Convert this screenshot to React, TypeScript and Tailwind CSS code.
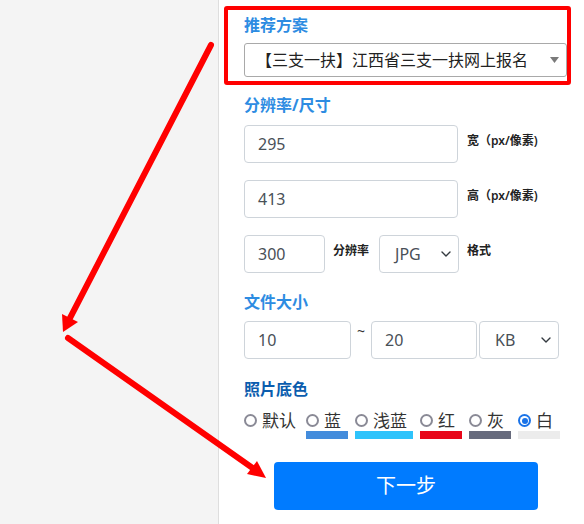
import React, { useState } from 'react';

const FONT = { fontFamily: '"Noto Sans", "Noto Sans CJK SC", sans-serif' };

const BG_OPTIONS = [
  { key: 'default', label: '默认', width: 'w-[55px]', bar: '' },
  { key: 'blue', label: '蓝', width: 'w-[42px]', bar: 'bg-[#438cdc]' },
  { key: 'lightblue', label: '浅蓝', width: 'w-[58px]', bar: 'bg-[#2ec3fb]' },
  { key: 'red', label: '红', width: 'w-[42px]', bar: 'bg-[#e8071a]' },
  { key: 'gray', label: '灰', width: 'w-[42px]', bar: 'bg-[#676b7d]' },
  { key: 'white', label: '白', width: 'w-[42px]', bar: 'bg-[#ececec]' },
];

const Chevron = () => (
  <svg width="10" height="6" viewBox="0 0 10 6" className="shrink-0">
    <path d="M1 1l4 4 4-4" fill="none" stroke="#343a40" strokeWidth="1.4" strokeLinecap="round" strokeLinejoin="round" />
  </svg>
);

const TextBox = ({ value, className }: { value: string; className: string }) => (
  <div className={`h-[38px] border border-[#ced4da] rounded-[4px] bg-white flex items-center pl-[13px] text-[16px] text-[#495057] ${className}`}>
    {value}
  </div>
);

const SelectBox = ({ value, className }: { value: string; className: string }) => (
  <div className={`h-[38px] border border-[#ced4da] rounded-[4px] bg-white flex items-center justify-between pl-[15px] pr-[7px] text-[16px] text-[#495057] ${className}`}>
    <span>{value}</span>
    <Chevron />
  </div>
);

const Heading = ({ children, dark }: { children: React.ReactNode; dark?: boolean }) => (
  <div className={`h-[24px] leading-[24px] text-[16px] font-bold ${dark ? 'text-[#0b5dae]' : 'text-[#2d8ce2]'}`}>{children}</div>
);

const Hint = ({ children, className }: { children: React.ReactNode; className?: string }) => (
  <span className={`pt-[8px] text-[12px] leading-[16px] font-semibold text-[#222] whitespace-nowrap ${className || ''}`}>{children}</span>
);

export default function App() {
  const [bg, setBg] = useState('white');

  return (
    <div className="relative w-[584px] h-[524px] overflow-hidden flex bg-[#f4f4f4]" style={FONT}>
      <div className="w-[218px] shrink-0" />

      {/* settings panel */}
      <div className="flex-1 bg-white border-l border-[#dedede] pl-[25px] pt-[13px]">
        <Heading>推荐方案</Heading>
        <div className="mt-[6px] w-[323px] h-[34px] border border-[#a9a9a9] rounded-[3px] flex items-center justify-between pl-[11px] pr-[7px] text-[16px] text-[#222]">
          <span>【三支一扶】江西省三支一扶网上报名</span>
          <svg width="9" height="6" viewBox="0 0 9 6"><path d="M0 0h9L4.5 6z" fill="#7a7a7a" /></svg>
        </div>

        <div className="mt-[16px]"><Heading>分辨率/尺寸</Heading></div>
        <div className="mt-[8px] flex items-start gap-[9px]">
          <TextBox value="295" className="w-[214px] h-[37px]" />
          <Hint>宽（px/像素)</Hint>
        </div>
        <div className="mt-[17px] flex items-start gap-[9px]">
          <TextBox value="413" className="w-[214px] h-[37px]" />
          <Hint>高（px/像素)</Hint>
        </div>
        <div className="mt-[17px] flex items-start">
          <TextBox value="300" className="w-[81px]" />
          <Hint className="ml-[8px]">分辨率</Hint>
          <SelectBox value="JPG" className="ml-[10px] w-[80px]" />
          <Hint className="ml-[8px]">格式</Hint>
        </div>

        <div className="mt-[17px]"><Heading>文件大小</Heading></div>
        <div className="mt-[7px] flex items-start">
          <TextBox value="10" className="w-[107px]" />
          <span className="w-[20px] text-center text-[14px] leading-[20px] text-[#333]">~</span>
          <TextBox value="20" className="w-[106px]" />
          <SelectBox value="KB" className="ml-[2px] w-[80px]" />
        </div>

        <div className="mt-[18px]"><Heading dark>照片底色</Heading></div>
        <div className="mt-[9px] flex gap-[7px]">
          {BG_OPTIONS.map(o => (
            <div key={o.key} className={`${o.width} flex flex-col cursor-pointer`} onClick={() => setBg(o.key)}>
              <div className="h-[21px] flex items-center gap-[5px]">
                {bg === o.key ? (
                  <span className="w-[13px] h-[13px] rounded-full bg-[#1a73e8] flex items-center justify-center">
                    <span className="w-[9px] h-[9px] rounded-full bg-white flex items-center justify-center">
                      <span className="w-[6px] h-[6px] rounded-full bg-[#1a73e8]" />
                    </span>
                  </span>
                ) : (
                  <span className="w-[13px] h-[13px] rounded-full border-2 border-[#8a8a96]" />
                )}
                <span className="text-[17px] leading-[21px] text-[#333]">{o.label}</span>
              </div>
              <div className={`h-[8px] ${o.bar}`} />
            </div>
          ))}
        </div>

        <button className="mt-[23px] ml-[30px] w-[264px] h-[48px] rounded-[4px] bg-[#007bff] text-white text-[20px]">下一步</button>
      </div>

      {/* red annotations */}
      <svg className="absolute inset-0 pointer-events-none" width="584" height="524" viewBox="0 0 584 524">
        <rect x="226" y="8" width="343" height="75" fill="none" stroke="#ff0000" strokeWidth="4" rx="1" />
        <line x1="211" y1="45" x2="70" y2="318" stroke="#ff0000" strokeWidth="6" strokeLinecap="round" />
        <path d="M63 332 L62 314 L78 322 Z" fill="#ff0000" />
        <line x1="68" y1="338" x2="254" y2="469" stroke="#ff0000" strokeWidth="6" strokeLinecap="round" />
        <path d="M266 478 L247 474 L257 461 Z" fill="#ff0000" />
      </svg>
    </div>
  );
}
